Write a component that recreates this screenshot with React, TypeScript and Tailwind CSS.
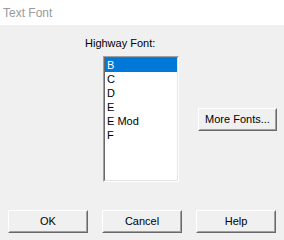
const fonts = ["B", "C", "D", "E", "E Mod", "F"];

function WinButton({ label, className = "" }: { label: string; className?: string }) {
  return (
    <div
      className={`h-[23px] border border-t-white border-l-white border-r-[#696969] border-b-[#696969] bg-[#f0f0f0] ${className}`}
    >
      <div className="flex h-full w-full items-center justify-center border border-t-[#f0f0f0] border-l-[#f0f0f0] border-r-[#a0a0a0] border-b-[#a0a0a0] text-[11px] text-black">
        {label}
      </div>
    </div>
  );
}

export default function App() {
  return (
    <div className="h-[240px] w-[284px] overflow-hidden bg-[#f0f0f0] font-['Liberation_Sans',Arial,sans-serif]">
      <div className="flex h-[25px] items-center bg-white pl-[3px] text-[12px] text-[#9a9a9a]">
        Text Font
      </div>

      <div className="flex h-[215px] flex-col">
        <div className="pl-[85px] pt-[12px] text-[11px] leading-[13px] text-black">Highway Font:</div>

        <div className="mt-[6px] flex">
          <div className="ml-[103px] h-[126px] w-[76px] border border-t-[#a0a0a0] border-l-[#a0a0a0] border-r-white border-b-white">
            <div className="h-full w-full border border-t-[#696969] border-l-[#696969] border-r-[#e3e3e3] border-b-[#e3e3e3] bg-white">
              {fonts.map((f, i) => (
                <div
                  key={f}
                  className={`flex h-[14px] items-center pl-[2px] text-[11px] ${
                    i === 0 ? "bg-[#0078d7] text-white" : "text-black"
                  }`}
                >
                  {f}
                </div>
              ))}
            </div>
          </div>
          <WinButton label="More Fonts..." className="ml-[19px] mt-[52px] w-[79px]" />
        </div>

        <div className="mt-[28px] flex gap-[14px] pl-[8px]">
          <WinButton label="OK" className="w-[80px]" />
          <WinButton label="Cancel" className="w-[80px]" />
          <WinButton label="Help" className="w-[80px]" />
        </div>
      </div>
    </div>
  );
}
